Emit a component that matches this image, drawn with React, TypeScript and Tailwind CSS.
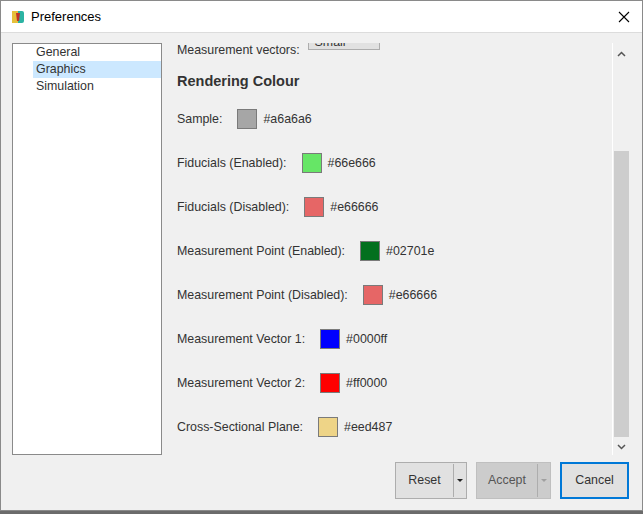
import React from "react";

const rows: [string, string][] = [
  ["Fiducials (Enabled):", "#66e666"],
  ["Fiducials (Disabled):", "#e66666"],
  ["Measurement Point (Enabled):", "#02701e"],
  ["Measurement Point (Disabled):", "#e66666"],
  ["Measurement Vector 1:", "#0000ff"],
  ["Measurement Vector 2:", "#ff0000"],
  ["Cross-Sectional Plane:", "#eed487"],
];

function Row({ label, color }: { label: string; color: string }) {
  return (
    <div className="flex items-center h-[44px]">
      <span>{label}</span>
      <span className="ml-[15px] w-[20px] h-[20px] border border-[#7a7a7a]" style={{ background: color }} />
      <span className="ml-[6px]">{color}</span>
    </div>
  );
}

export default function App() {
  return (
    <div className="w-[643px] h-[514px] bg-[#6b6b6b] relative" style={{ fontFamily: "'Liberation Sans', Arial, sans-serif" }}>
      <div className="absolute left-0 top-0 w-[643px] h-[511px] border border-[#8a8a8a] bg-[#f0f0f0] flex flex-col text-[12.4px] text-[#333]">
        <div className="h-[32px] bg-white flex items-center border-b border-[#dcdcdc] shrink-0">
          <svg width="14" height="14" viewBox="0 0 14 14" className="ml-[10px]">
            <rect x="1" y="1" width="12" height="12" rx="2" fill="#2bb3a3" />
            <rect x="1" y="1" width="6" height="12" fill="#e6c03a" />
            <path d="M5 3 h4 l-1 8 h-2 z" fill="#c0302a" />
          </svg>
          <span className="ml-[6px] text-[13px] text-black">Preferences</span>
          <svg width="12" height="12" viewBox="0 0 12 12" className="ml-auto mr-[12px]">
            <path d="M1 1 L11 11 M11 1 L1 11" stroke="#000" strokeWidth="1.1" />
          </svg>
        </div>
        <div className="flex flex-1 pt-[10px] pl-[11px] pr-[13px]">
          <div className="w-[150px] h-[412px] bg-white border border-[#8a8a8a] pt-[0px]">
            <div className="pl-[23px] h-[17px] leading-[17px]">General</div>
            <div className="ml-[20px] pl-[3px] h-[17px] leading-[17px] bg-[#cce8ff]">Graphics</div>
            <div className="pl-[23px] h-[17px] leading-[17px]">Simulation</div>
          </div>
          <div className="flex-1 flex flex-col">
            <div className="flex h-[412px]">
              <div className="flex-1 overflow-hidden pl-[15px]">
                <div className="flex items-center -mt-[8px] h-[30px]">
                  <span>Measurement vectors:</span>
                  <span className="ml-[8px] w-[72px] h-[23px] border border-[#adadad] bg-[#e1e1e1] pl-[6px] leading-[21px] self-start -mt-[8px] pt-[4px]">Small</span>
                </div>
                <div className="font-bold text-[14.5px] h-[32px] leading-[32px] mt-[0px]">Rendering Colour</div>
                <div className="flex items-center h-[44px]">
                  <span>Sample:</span>
                  <span className="ml-[15px] w-[20px] h-[20px] border border-[#7a7a7a] bg-[#a6a6a6]" />
                  <span className="ml-[6px]">#a6a6a6</span>
                </div>
                {rows.map(([l, c], i) => (
                  <Row key={i} label={l} color={c} />
                ))}
              </div>
              <div className="w-[17px] border-l border-white flex flex-col items-center">
                <svg width="9" height="6" viewBox="0 0 9 6" className="mt-[8px]"><path d="M1 5 L4.5 1.5 L8 5" stroke="#555" strokeWidth="1.5" fill="none" /></svg>
                <div className="w-[15px] mt-[94px] h-[286px] bg-[#cdcdcd]" />
                <svg width="9" height="6" viewBox="0 0 9 6" className="mt-[7px]"><path d="M1 1 L4.5 4.5 L8 1" stroke="#555" strokeWidth="1.5" fill="none" /></svg>
              </div>
            </div>
            <div className="flex justify-end gap-[9px] mt-[7px]">
              <div className="w-[72px] h-[37px] border border-[#adadad] bg-[#e1e1e1] flex items-center">
                <span className="flex-1 text-center">Reset</span>
                <span className="w-px h-[33px] bg-[#adadad]" />
                <svg width="12" height="6" viewBox="0 0 12 6"><path d="M3 1 h6 l-3 3z" fill="#222" /></svg>
              </div>
              <div className="w-[75px] h-[37px] border border-[#bfbfbf] bg-[#cccccc] flex items-center text-[#555]">
                <span className="flex-1 text-center">Accept</span>
                <span className="w-px h-[33px] bg-[#adadad]" />
                <svg width="12" height="6" viewBox="0 0 12 6"><path d="M3 1 h6 l-3 3z" fill="#a0a0a0" /></svg>
              </div>
              <div className="w-[69px] h-[37px] border-2 border-[#0078d7] bg-[#e1e1e1] flex items-center justify-center">Cancel</div>
            </div>
          </div>
        </div>
      </div>
    </div>
  );
}
